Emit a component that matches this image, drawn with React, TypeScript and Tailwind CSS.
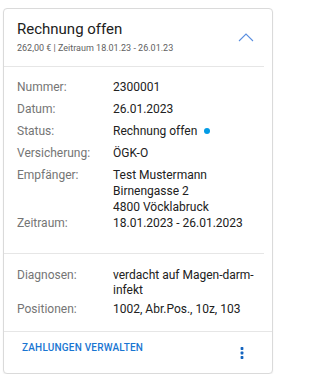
type Row = { label: string; value: React.ReactNode; className?: string };

const topRows: Row[] = [
  { label: "Nummer:", value: "2300001" },
  { label: "Datum:", value: "26.01.2023" },
  {
    label: "Status:",
    value: (
      <span className="flex items-center gap-[7px]">
        Rechnung offen
        <span className="inline-block h-[6px] w-[6px] rounded-full bg-[#039be5]" />
      </span>
    ),
  },
  { label: "Versicherung:", value: "ÖGK-O" },
  {
    label: "Empfänger:",
    value: (
      <>
        Test Mustermann
        <br />
        Birnengasse 2
        <br />
        4800 Vöcklabruck
      </>
    ),
  },
  { label: "Zeitraum:", value: "18.01.2023 - 26.01.2023" },
];

const bottomRows: Row[] = [
  {
    label: "Diagnosen:",
    value: <span className="block leading-[15px] pt-[1px]">verdacht auf Magen-darm-<br />infekt</span>,
    className: "min-h-[34px]",
  },
  { label: "Positionen:", value: "1002, Abr.Pos., 10z, 103" },
];

function Rows({ rows }: { rows: Row[] }) {
  return (
    <div className="flex flex-col">
      {rows.map((r) => (
        <div key={r.label} className={`flex min-h-[22px] items-start ${r.className ?? ""}`}>
          <div className="w-[96px] shrink-0 text-[#757575]">{r.label}</div>
          <div className="text-[#212121]">{r.value}</div>
        </div>
      ))}
    </div>
  );
}

export default function App() {
  return (
    <div className="pl-[3px] pt-2 font-['Roboto',sans-serif]">
      <div className="w-[270px] rounded-[4px] border border-[#dadada] bg-white shadow-[0_1px_2px_rgba(0,0,0,0.06)]">
        <div className="mr-2 flex items-center justify-between border-b border-[#e6e6e6] pl-[13px] pr-[10px] pt-[10px] pb-[12px]">
          <div>
            <div className="text-[15px] leading-[20px] text-[#212121]">Rechnung offen</div>
            <div className="mt-[2.5px] text-[9px] leading-[12px] text-[#616161]">
              262,00 € | Zeitraum 18.01.23 - 26.01.23
            </div>
          </div>
          <svg width="16" height="10" viewBox="0 0 16 10" className="mt-[2px]">
            <polyline points="1,9 8,2 15,9" fill="none" stroke="#5b8fe0" strokeWidth="1.1" />
          </svg>
        </div>

        <div className="mr-2 border-b border-[#e6e6e6] pl-[13px] pt-[12px] pb-[16px] text-[12px] leading-[16px]">
          <Rows rows={topRows} />
        </div>

        <div className="border-b border-[#e6e6e6] pl-[13px] pt-[13px] pb-[8px] text-[12px] leading-[16px]">
          <Rows rows={bottomRows} />
        </div>

        <div className="flex h-[41px] items-start justify-between pl-[18px] pr-[21px] pt-[10px]">
          <button className="text-[10px] font-medium leading-[12px] tracking-[0.2px] text-[#1976d2]">
            ZAHLUNGEN VERWALTEN
          </button>
          <svg width="18" height="18" viewBox="0 0 18 18" className="mt-[2px]">
            <rect x="7.6" y="3.1" width="2.8" height="2.8" rx="0.6" fill="#1565c0" />
            <rect x="7.6" y="7.6" width="2.8" height="2.8" rx="0.6" fill="#1565c0" />
            <rect x="7.6" y="12.1" width="2.8" height="2.8" rx="0.6" fill="#1565c0" />
          </svg>
        </div>
      </div>
    </div>
  );
}
